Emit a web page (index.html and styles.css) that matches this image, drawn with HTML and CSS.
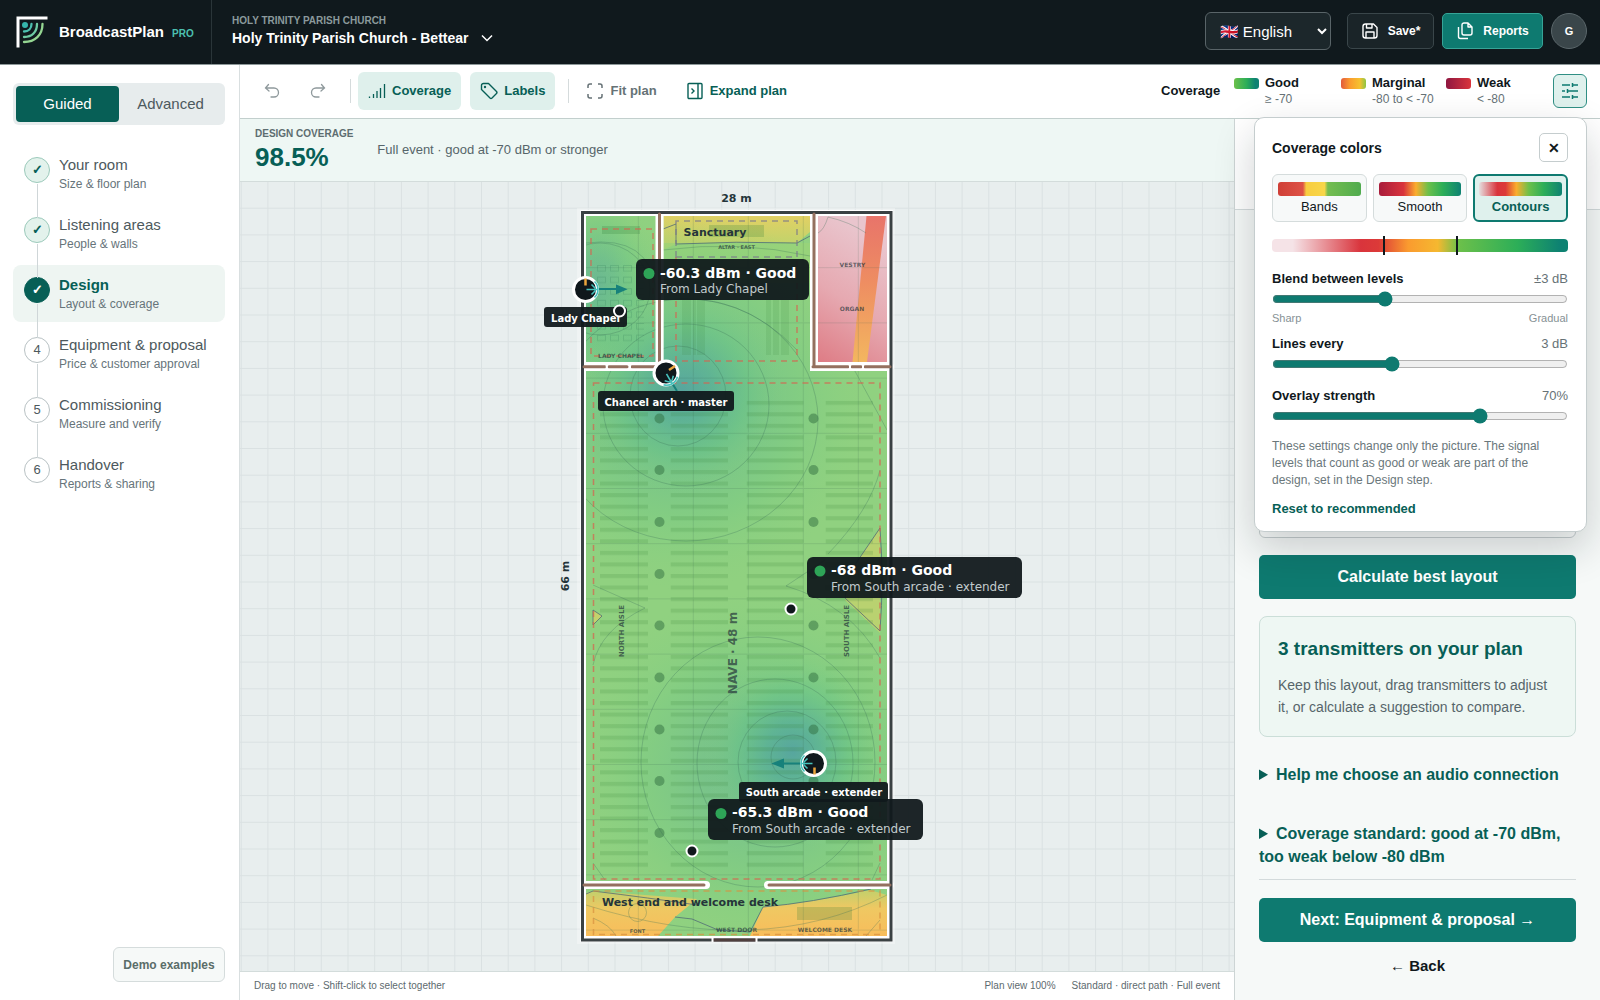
FILE: index.html
```html
<!DOCTYPE html>
<html lang="en">
<head>
<meta charset="utf-8">
<title>BroadcastPlan</title>
<link rel="stylesheet" href="styles.css">
</head>
<body>
<div class="app">
  <header class="topbar">
    <div class="brand">
      <svg class="brand-logo" viewBox="0 0 32 32" fill="none" stroke-linecap="round" aria-hidden="true">
        <path d="M2 30V2h28" stroke="#fff" stroke-width="3" stroke-linecap="square"/>
        <circle cx="9" cy="9" r="3" fill="#35b5ab"/>
        <path d="M15.500 8c0 4.500-3 7.500-7.500 7.500" stroke="#4cc0b0" stroke-width="2.300"/>
        <path d="M21 8c0 8-5 13-13 13" stroke="#6ecba4" stroke-width="2.300"/>
        <path d="M26.500 8c0 11-7.500 18-18.500 18" stroke="#95d692" stroke-width="2.300"/>
      </svg>
      <span class="brand-name">BroadcastPlan</span><span class="brand-tier">PRO</span>
    </div>
    <div class="project">
      <span class="project-site">HOLY TRINITY PARISH CHURCH</span>
      <button class="project-switch">Holy Trinity Parish Church - Bettear
        <svg width="12" height="8" viewBox="0 0 12 8" fill="none" stroke="currentColor" stroke-width="1.500"><path d="M1 1.500l5 5 5-5"/></svg>
      </button>
    </div>
    <div class="top-actions">
      <select class="lang" aria-label="Language"><option>🇬🇧 English</option></select>
      <button class="btn-save"><svg width="18" height="18" viewBox="0 0 18 18" fill="none" stroke="currentColor" stroke-width="1.400" stroke-linejoin="round"><path d="M2 4.500A2.500 2.500 0 0 1 4.500 2h8L16 5.500v8a2.500 2.500 0 0 1-2.500 2.500h-9A2.500 2.500 0 0 1 2 13.500zM5.500 2v4h5.500V2M5 16v-6h8v6"/></svg>Save*</button>
      <button class="btn-reports"><svg width="18" height="18" viewBox="0 0 18 18" fill="none" stroke="currentColor" stroke-width="1.400" stroke-linejoin="round"><path d="M6 3a2 2 0 0 1 2-2h4l4 4v6a2 2 0 0 1-2 2H8a2 2 0 0 1-2-2zM12 1v4h4M2.500 5v9.500A2 2 0 0 0 4.500 16.500H12"/></svg>Reports</button>
      <button class="avatar" aria-label="Account">G</button>
    </div>
  </header>

  <aside class="sidebar">
    <div class="mode"><button class="mode-on">Guided</button><button class="mode-off">Advanced</button></div>
    <ol class="steps">
      <li class="step done"><span class="dot">✓</span><div><b>Your room</b><small>Size &amp; floor plan</small></div></li>
      <li class="step done"><span class="dot">✓</span><div><b>Listening areas</b><small>People &amp; walls</small></div></li>
      <li class="step current"><span class="dot">✓</span><div><b>Design</b><small>Layout &amp; coverage</small></div></li>
      <li class="step"><span class="dot">4</span><div><b>Equipment &amp; proposal</b><small>Price &amp; customer approval</small></div></li>
      <li class="step"><span class="dot">5</span><div><b>Commissioning</b><small>Measure and verify</small></div></li>
      <li class="step"><span class="dot">6</span><div><b>Handover</b><small>Reports &amp; sharing</small></div></li>
    </ol>
    <button class="demo">Demo examples</button>
  </aside>

  <div class="toolbar">
    <button class="tool icon-only" aria-label="Undo"><svg width="16" height="16" viewBox="0 0 16 16" fill="none" stroke="currentColor" stroke-width="1.300" stroke-linecap="round"><path d="M4.500 1.500L1.500 5l3.500 3M1.500 5H10a4.500 4.500 0 0 1 0 9H7"/></svg></button>
    <button class="tool icon-only" aria-label="Redo"><svg width="16" height="16" viewBox="0 0 16 16" fill="none" stroke="currentColor" stroke-width="1.300" stroke-linecap="round"><path d="M11.500 1.500l3 3.500-3.500 3M14.500 5H6a4.500 4.500 0 0 0 0 9h3"/></svg></button>
    <i class="divider"></i>
    <button class="tool on"><svg width="18" height="18" viewBox="0 0 18 18" fill="none" stroke="currentColor" stroke-width="1.300"><path d="M1.500 14.500V16M5.500 12v4M9 9v7M12.500 6v10M16.500 2v14"/></svg>Coverage</button>
    <button class="tool on labels"><svg width="18" height="18" viewBox="0 0 18 18" fill="none" stroke="currentColor" stroke-width="1.400" stroke-linejoin="round"><path d="M1.500 3.500a2 2 0 0 1 2-2h5l8 8a1.500 1.500 0 0 1 0 2l-4.500 4.500a1.500 1.500 0 0 1-2 0l-8.500-8.500z"/><circle cx="5" cy="5" r=".5"/></svg>Labels</button>
    <i class="divider"></i>
    <button class="tool"><svg width="18" height="18" viewBox="0 0 18 18" fill="none" stroke="currentColor" stroke-width="1.500"><path d="M2 6V4a2 2 0 0 1 2-2h2M12 2h2a2 2 0 0 1 2 2v2M16 12v2a2 2 0 0 1-2 2h-2M6 16H4a2 2 0 0 1-2-2v-2"/></svg>Fit plan</button>
    <button class="tool strong"><svg width="18" height="18" viewBox="0 0 18 18" fill="none" stroke="currentColor" stroke-width="1.400"><rect x="2" y="1.500" width="14" height="15" rx="1"/><path d="M12 1.500v15M5.500 6.500L8 9l-2.500 2.500"/></svg>Expand plan</button>
    <div class="legend">
      <strong>Coverage</strong>
      <div class="key"><i class="swatch good"></i><div><b>Good</b><small>≥ -70</small></div></div>
      <div class="key"><i class="swatch marginal"></i><div><b>Marginal</b><small>-80 to &lt; -70</small></div></div>
      <div class="key"><i class="swatch weak"></i><div><b>Weak</b><small>&lt; -80</small></div></div>
    </div>
    <button class="settings" aria-label="Coverage colors"><svg width="18" height="18" viewBox="0 0 18 18" fill="none" stroke="currentColor" stroke-width="1.500"><path d="M1 3h8M12 3h5M11.500 1v4M1 9h3M7 9h10M6.500 7v4M1 15h8M12 15h5M11.500 13v4"/></svg></button>
  </div>

  <main class="stage">
    <section class="summary">
      <div><h2>DESIGN COVERAGE</h2><p class="score">98.5%</p></div>
      <p class="basis">Full event · good at -70 dBm or stronger</p>
    </section>
    <div class="canvas">
      <svg class="plan" viewBox="240 182 994 789">
        <defs>
          <pattern id="grid" x="240.700" y="181" width="26.700" height="26.700" patternUnits="userSpaceOnUse"><path d="M0 .5H26.700M.5 0V26.700" stroke="#dae1e2" fill="none"/></pattern>
          <pattern id="meters" x="637.800" y="212" width="55" height="55.200" patternUnits="userSpaceOnUse"><path d="M0 .5H55M.5 0V55" stroke="#2f5f4a" stroke-opacity=".16" fill="none"/></pattern>
          <pattern id="pews" x="600" y="400.700" width="300" height="11.550" patternUnits="userSpaceOnUse"><path d="M0 2H48M70.700 2H128M146.700 2H203.500M225.700 2H273" stroke="#2f7a35" stroke-opacity=".16" stroke-width="4"/></pattern>
          <pattern id="chairs" x="597" y="265" width="13" height="11.600" patternUnits="userSpaceOnUse"><rect x=".5" y=".5" width="8" height="5.500" fill="none" stroke="#2f7a55" stroke-opacity=".22"/></pattern>
          <radialGradient id="hot"><stop offset="0" stop-color="#4f9fa3"/><stop offset=".3" stop-color="#54ae98" stop-opacity=".85"/><stop offset=".62" stop-color="#67c487" stop-opacity=".65"/><stop offset="1" stop-color="#84cf80" stop-opacity="0"/></radialGradient>
          <linearGradient id="vestry" x1=".3" y1="0" x2="0" y2="1"><stop offset="0" stop-color="#e9c5cd"/><stop offset=".5" stop-color="#e6a9b1"/><stop offset="1" stop-color="#de7c85"/></linearGradient>
          <linearGradient id="strip" x2="0" y2="1"><stop offset="0" stop-color="#e8746a"/><stop offset=".45" stop-color="#ee8d62"/><stop offset="1" stop-color="#f3b65f"/></linearGradient>
          <linearGradient id="sun" x2="0" y2="1"><stop offset="0" stop-color="#e2d064"/><stop offset="1" stop-color="#b9d46d"/></linearGradient>
          <linearGradient id="amber" x2="0" y2="1"><stop offset="0" stop-color="#c2d06c"/><stop offset=".4" stop-color="#efc862"/><stop offset="1" stop-color="#f8bd5b"/></linearGradient>
          <clipPath id="rooms"><path d="M586 216H656V362H586zM663.500 216H810V371H663.500zM818 216H887V362H818zM586 371H887V881H586zM706 880H767V890H706zM586 889H887V936H586z"/></clipPath>
        </defs>
        <rect x="-400" y="-200" width="2400" height="1500" fill="url(#grid)"/>
        <rect x="577" y="208" width="318" height="736" fill="#fff" opacity=".3"/>
        <rect x="580.500" y="210" width="312.500" height="732" fill="#fff"/>
        <g clip-path="url(#rooms)">
          <rect x="580" y="210" width="313" height="732" fill="#90d180"/>
          <path d="M663 216H810V232L797 243Q735 241 676 244L663 250z" fill="url(#sun)"/>
          <rect x="663" y="243" width="147" height="40" fill="#9dd376" opacity=".6"/>
          <ellipse cx="598" cy="285" rx="60" ry="95" fill="url(#hot)" opacity=".6"/>
          <ellipse cx="682" cy="400" rx="190" ry="190" fill="url(#hot)" opacity=".5"/>
          <ellipse cx="682" cy="390" rx="105" ry="105" fill="url(#hot)" opacity=".75"/>
          <ellipse cx="760" cy="770" rx="190" ry="180" fill="url(#hot)" opacity=".45"/>
          <ellipse cx="793" cy="752" rx="90" ry="100" fill="url(#hot)" opacity=".8"/>
          <path d="M880 528L850 572 845 600 880 633z" fill="#c3d26c" opacity=".8"/>
          <path d="M593 610l9 6-9 9z" fill="#c3d26c"/>
          <rect x="818" y="216" width="69" height="146" fill="url(#vestry)"/>
          <path d="M866.500 216H886L867 362H852.500z" fill="url(#strip)"/>
          <path d="M586 893L593 891 697 899 675 917 658 936H586z" fill="url(#amber)"/>
          <path d="M763 907Q810 903 870 890L887 895V936H750z" fill="url(#amber)"/>
          <rect x="586" y="216" width="301" height="720" fill="url(#meters)"/>
          <rect x="600" y="400.700" width="273" height="467" fill="url(#pews)"/>
          <rect x="597" y="265" width="47" height="78" fill="url(#chairs)"/>
          <path fill="#2f7a35" fill-opacity=".22" d="M602 226H640V234H602zM709 225H764V237H709zM797 907H852V920H797z"/>
          <path fill="#2f7a35" fill-opacity=".12" d="M682 300H691V355H682zM693 300H696V355H693zM697 300H705V355H697zM766 300H771V355H766zM773 300H779V355H773zM781 300H789V355H781z"/>
          <g fill="#2f6b3c" fill-opacity=".48">
            <circle cx="659.500" cy="418.500" r="5"/><circle cx="659.500" cy="470" r="5"/><circle cx="659.500" cy="522" r="5"/><circle cx="659.500" cy="574" r="5"/><circle cx="659.500" cy="625.500" r="5"/><circle cx="659.500" cy="677.500" r="5"/><circle cx="659.500" cy="729.500" r="5"/><circle cx="659.500" cy="781" r="5"/><circle cx="659.500" cy="833" r="5"/>
            <circle cx="813.500" cy="418.500" r="5"/><circle cx="813.500" cy="470" r="5"/><circle cx="813.500" cy="522" r="5"/><circle cx="813.500" cy="574" r="5"/><circle cx="813.500" cy="625.500" r="5"/><circle cx="813.500" cy="677.500" r="5"/><circle cx="813.500" cy="729.500" r="5"/><circle cx="813.500" cy="781" r="5"/>
          </g>
          <g fill="none" stroke="#3c7058" stroke-opacity=".3">
            <ellipse cx="678" cy="396" rx="48" ry="50"/><ellipse cx="686" cy="405" rx="83" ry="81"/><ellipse cx="686" cy="420" rx="132" ry="121"/>
            <ellipse cx="793" cy="757" rx="22" ry="22"/><ellipse cx="787" cy="762" rx="49" ry="51"/><ellipse cx="775" cy="763" rx="78" ry="84"/><ellipse cx="758" cy="762" rx="117" ry="125"/>
            <ellipse cx="600" cy="289" rx="50" ry="46"/><path d="M586 243Q650 235 656 290M880 470Q870 510 828 554M786 586L825 560M786 586Q850 605 880 658M593 585L645 608Q600 630 593 665M663 250Q740 240 810 256M586 905Q760 960 887 895M593 918Q610 925 616 936M880 920L866 936M593 863L605 880M880 863L872 880M663 300Q740 290 797 350M850 362L887 430M818 233Q824 230 828 217Q850 222 866 233"/>
            <circle cx="637.500" cy="912.500" r="9"/>
          </g>
          <path d="M663 229L676 224V244Q736 241 797 243L810 236M880 528L850 572 845 598 880 631Q884 580 880 528M593 610l9 6-9 9zM586 894L593 891Q650 898 697 905M763 907Q810 903 871 889M675 917L692 919 718 930 750 932 763 907" fill="none" stroke="#4d6675" stroke-opacity=".75"/>
        </g>
        <g fill="none" stroke="#d9604f" stroke-opacity=".7" stroke-width="1.500" stroke-dasharray="6 5">
          <rect x="591" y="229" width="62" height="127"/><path d="M676 257V361H797V257"/><rect x="593.500" y="383" width="286.500" height="496"/><rect x="593.500" y="891" width="286.500" height="43.500" stroke="#d9903f"/>
          <path d="M676 257V221H797V257z" stroke="#77738c"/>
        </g>
        <g fill="none" stroke-linecap="round">
          <path d="M659.500 214V364M814 214V366M584 366.700H660M814 366.700H890M584 885H706M768 885H890" stroke="#fff" stroke-width="8"/>
          <rect x="582.500" y="212.500" width="308.500" height="727.500" stroke="#3a4143" stroke-width="3" stroke-linecap="butt"/>
          <path d="M659.500 214V364M814 214V366M584 366.700H605M609 366.700H627M632 366.700H656M813 366.700H848M852 366.700H861M865 366.700H890M584 885H704M769 885H890" stroke="#94705f" stroke-width="3"/>
          <path d="M714 940H755" stroke="#4f3f3e" stroke-width="3"/><path d="M712.500 938V942M756.500 938V942M606.700 364V369M630 364V369M850 364V369M863 364V369" stroke="#fff" stroke-width="2" stroke-linecap="butt"/>
        </g>
        <g class="plan-text">
          <text x="736.500" y="202" class="t11">28 m</text>
          <text transform="translate(569 576) rotate(-90)" class="t11">66 m</text>
          <text x="715" y="236" class="t11">Sanctuary</text>
          <text x="690" y="906" class="t11">West end and welcome desk</text>
          <g class="faint">
            <text transform="translate(737 653) rotate(-90)" class="t12">NAVE · 48 m</text>
            <text transform="translate(624 631) rotate(-90)" class="t7">NORTH AISLE</text>
            <text transform="translate(849 631) rotate(-90)" class="t7">SOUTH AISLE</text>
            <text x="852.500" y="267" class="t6">VESTRY</text><text x="852" y="311" class="t6">ORGAN</text>
            <text x="736.500" y="249" class="t5">ALTAR · EAST</text><text x="621" y="358" class="t6">LADY CHAPEL</text>
            <text x="637.500" y="933" class="t5">FONT</text><text x="736.500" y="932" class="t6">WEST DOOR</text><text x="825" y="932" class="t6">WELCOME DESK</text>
          </g>
        </g>
        <g fill="#17817b" stroke="#17817b" stroke-width="2">
          <path d="M597 289H618M617 286l8 3.300-8 3.400zM672 383l5 8M800 763.500H782M783 760l-9 3.500 9 3.500z"/>
        </g>
        <g class="nodes">
          <g transform="translate(585.500 289.500)"><circle r="12" fill="#10181c" stroke="#fff" stroke-width="3"/><path d="M0-11V-4" stroke="#eba53c" stroke-width="2.500"/><g class="fan"><path d="M1 0H13M6-5L10-1M6 5L10 1M9-8A11 11 0 0 1 9 8"/></g></g>
          <g transform="translate(666 373)"><circle r="12" fill="#10181c" stroke="#fff" stroke-width="3"/><path d="M3-3L9-7" stroke="#eba53c" stroke-width="2.500"/><g class="fan" transform="rotate(60)"><path d="M1 0H13M6-5L10-1M6 5L10 1M9-8A11 11 0 0 1 9 8"/></g></g>
          <g transform="translate(813.500 763.500)"><circle r="12" fill="#10181c" stroke="#fff" stroke-width="3"/><path d="M1 4V11" stroke="#eba53c" stroke-width="2.500"/><g class="fan" transform="rotate(180)"><path d="M1 0H13M6-5L10-1M6 5L10 1M9-8A11 11 0 0 1 9 8"/></g></g>
        </g>
        <g class="tag"><rect x="544" y="307" width="83" height="20" rx="3"/><text x="585.500" y="321.500">Lady Chapel</text>
          <rect x="598" y="391" width="136" height="20" rx="3"/><text x="666" y="405.500">Chancel arch · master</text>
          <rect x="739" y="782" width="149" height="20" rx="3"/><text x="814" y="795.500">South arcade · extender</text></g>
        <g fill="#10181c" stroke="#fff" stroke-width="2"><circle cx="619.500" cy="311" r="5.500"/><circle cx="791" cy="609" r="5.500"/><circle cx="692" cy="851" r="5.500"/></g>
        <g class="tip" transform="translate(636 259)"><rect width="173" height="41" rx="6"/><circle cx="13" cy="14.500" r="5.500"/><text x="24" y="18.500" class="tip-main">-60.3 dBm · Good</text><text x="24" y="34" class="tip-sub">From Lady Chapel</text></g>
        <g class="tip" transform="translate(807 557)"><rect width="215" height="41" rx="6"/><circle cx="13" cy="14" r="5.500"/><text x="24" y="18" class="tip-main">-68 dBm · Good</text><text x="24" y="34" class="tip-sub">From South arcade · extender</text></g>
        <g class="tip" transform="translate(708 799)"><rect width="215" height="41" rx="6"/><circle cx="13" cy="14.500" r="5.500"/><text x="24" y="18" class="tip-main">-65.3 dBm · Good</text><text x="24" y="34" class="tip-sub">From South arcade · extender</text></g>
      </svg>
    </div>
    <footer class="status"><span>Drag to move · Shift-click to select together</span><span class="push">Plan view 100%</span><span>Standard · direct path · Full event</span></footer>
  </main>

  <aside class="panel">
    <div class="panel-head"></div>
    <div class="panel-body">
      <div class="options"></div>
      <button class="primary">Calculate best layout</button>
      <section class="note"><h3>3 transmitters on your plan</h3><p>Keep this layout, drag transmitters to adjust it, or calculate a suggestion to compare.</p></section>
      <details class="help"><summary>Help me choose an audio connection</summary></details>
      <details class="standard"><summary>Coverage standard: good at -70 dBm, too weak below -80 dBm</summary></details>
      <div class="nav"><button class="primary">Next: Equipment &amp; proposal →</button><button class="back">← Back</button></div>
    </div>
  </aside>

  <section class="popover">
    <div class="pop-head"><h2>Coverage colors</h2><button class="close" aria-label="Close">✕</button></div>
    <div class="styles">
      <button class="style"><i class="ramp bands"></i>Bands</button>
      <button class="style"><i class="ramp smooth"></i>Smooth</button>
      <button class="style chosen"><i class="ramp contours"></i>Contours</button>
    </div>
    <div class="scale"><i class="mark low"></i><i class="mark high"></i></div>
    <div class="field blend"><label for="blend">Blend between levels</label><output>±3 dB</output><input id="blend" type="range" min="0" max="8" value="3"><small>Sharp</small><small>Gradual</small></div>
    <div class="field lines"><label for="lines">Lines every</label><output>3 dB</output><input id="lines" type="range" min="1" max="6" value="3"></div>
    <div class="field"><label for="overlay">Overlay strength</label><output>70%</output><input id="overlay" type="range" min="20" max="90" value="70"></div>
    <p>These settings change only the picture. The signal levels that count as good or weak are part of the design, set in the Design step.</p>
    <button class="reset">Reset to recommended</button>
  </section>
</div>
</body>
</html>
```
FILE: styles.css
```css
* { box-sizing: border-box; }
body { margin: 0; font: 13px/16px "Liberation Sans", Arial, sans-serif; color: #10181c; background: #fff; }
h2, h3, p, ol { margin: 0; padding: 0; }
button { font: inherit; color: inherit; padding: 0; border: 0; background: none; cursor: pointer; }
svg { flex: none; }
b, small { display: block; }

.app { position: relative; display: grid; grid-template: 65px 54px minmax(0, 1fr) / 240px minmax(0, 1fr) 366px; min-height: 100vh; }

.topbar { grid-column: 1 / -1; display: flex; background: #10191d; color: #fff; border-bottom: 1px solid #8d9899; }
.brand { width: 212px; display: flex; align-items: center; padding-left: 16px; border-right: 1px solid #2a3539; }
.brand-logo { width: 32px; height: 32px; }
.brand-name { margin-left: 11px; font-size: 15px; font-weight: 700; }
.brand-tier { margin: 3px 0 0 8px; font-size: 10px; font-weight: 700; color: #4cc0b0; }
.project { display: flex; flex-direction: column; justify-content: center; align-items: flex-start; padding: 0 0 2px 20px; }
.project-site { font-size: 10px; font-weight: 700; line-height: 14px; color: #8b999c; }
.project-switch { display: flex; align-items: center; gap: 12px; font-size: 14px; font-weight: 700; line-height: 20px; }
.top-actions { margin-left: auto; display: flex; align-items: center; gap: 8px; padding: 0 13px 2px 0; }
.lang { width: 126px; height: 38px; margin-right: 8px; padding: 0 0 0 10px; font: 15px "Liberation Sans", "Noto Color Emoji", sans-serif; color: #fff; background: #1c272b; border: 1px solid #596468; border-radius: 6px; }
.btn-save, .btn-reports { display: flex; align-items: center; justify-content: center; gap: 9px; height: 36px; font-size: 12px; font-weight: 700; border: 1px solid #3a464a; border-radius: 5px; background: #1a2428; }
.btn-save { width: 87px; }
.btn-reports { width: 101px; background: #0e7a70; border-color: #36a497; }
.avatar { width: 36px; height: 36px; font-size: 11px; font-weight: 700; border: 1px solid #5b676b; border-radius: 50%; background: #3a464a; }

.sidebar { grid-row: 2 / 4; display: flex; flex-direction: column; padding: 18px 14px 18px 13px; border-right: 1px solid #d9dfe0; background: #fff; }
.mode { display: grid; grid-template-columns: 1fr 1fr; padding: 3px; border-radius: 6px; background: #e7eced; font-size: 15px; }
.mode button { height: 36px; border-radius: 4px; color: #4d595d; }
.mode .mode-on { background: #075f56; color: #fff; }
.steps { list-style: none; margin-top: 20px; display: grid; gap: 3px; }
.step { position: relative; display: flex; gap: 9px; height: 57px; padding: 9px 0 0 11px; border-radius: 8px; color: #4d595d; }
.step b { font-size: 15px; font-weight: 400; line-height: 22px; }
.step small { font-size: 12px; line-height: 16px; color: #66747a; }
.step:not(:last-child)::after { content: ""; position: absolute; left: 24px; top: 39px; width: 1px; height: 34px; background: #cfd6d8; z-index: 1; }
.dot { width: 26px; height: 26px; margin-top: 3px; border: 1px solid #b9c2c4; border-radius: 50%; background: #fff; text-align: center; line-height: 24px; }
.done .dot { border-color: #9ccabb; background: #e3f2ec; color: #075f56; font-weight: 700; }
.current { background: #eef5f2; }
.current .dot { background: #075f56; border-color: #075f56; color: #fff; font-weight: 700; }
.current b { font-weight: 700; color: #075f56; }
.demo { margin-top: auto; align-self: flex-end; width: 112px; height: 35px; border: 1px solid #d5dcdc; border-radius: 6px; background: #f6f9f8; color: #5a6d69; font-size: 12px; font-weight: 700; }

.toolbar { grid-column: 2 / 4; display: flex; align-items: center; padding: 0 13px 2px 9px; border-bottom: 1px solid #c2cfcd; }
.tool { display: flex; align-items: center; gap: 6px; height: 38px; padding: 0 10px; border-radius: 6px; font-weight: 700; color: #667276; }
.icon-only { width: 46px; padding: 0 15px; color: #8f999c; }
.tool.on, .tool.strong { color: #075f56; }
.tool.on { background: #dff0ec; }
.labels { margin-left: 9px; }
.divider { width: 1px; height: 24px; margin: 0 7px 0 9px; background: #d5dbdc; }
.labels + .divider { margin: 0 7px 0 13px; }
.strong { margin-left: 9px; }
.legend { margin-left: auto; display: grid; grid-template-columns: 73px 107px 105px 107px; align-items: center; }
.key { display: flex; gap: 6px; }
.key small { font-size: 12px; color: #667276; }
.swatch { width: 25px; height: 11px; margin-top: 3px; border-radius: 3px; }
.good { background: linear-gradient(90deg, #6cc04a, #2cae58 50%, #0e8272 85%); }
.marginal { background: linear-gradient(90deg, #e25a3c, #fa9b2f 35%, #f5c130 75%, #8cc544); }
.weak { background: linear-gradient(90deg, #8f1640, #d9343c); }
.settings { width: 34px; height: 34px; display: grid; place-items: center; border: 1px solid #2f8f84; border-radius: 6px; background: #dff1ed; color: #0e7a70; }

.stage { display: flex; flex-direction: column; min-width: 0; }
.summary { display: flex; align-items: center; gap: 24px; height: 63px; padding: 0 15px; background: #eef7f4; border-bottom: 1px solid #d3dcdb; }
.summary h2 { font-size: 10px; line-height: 14px; color: #5d6d70; }
.score { font-size: 26px; font-weight: 700; line-height: 32px; color: #075f56; }
.basis { color: #56656a; }
.canvas { flex: 1; min-height: 0; background: #e8eeee; overflow: hidden; }
.plan { display: block; width: 100%; height: 100%; overflow: visible; }
.plan-text { font-family: "DejaVu Sans", sans-serif; font-weight: 700; fill: #25353a; text-anchor: middle; }
.faint { fill-opacity: .7; }
.t12 { font-size: 12px; }
.t11 { font-size: 11px; }
.t7 { font-size: 7px; }
.t6 { font-size: 6px; }
.t5 { font-size: 5px; }
.fan { fill: none; stroke: #47c2bd; stroke-width: 1.6; }
.tag { font: 700 10px "DejaVu Sans", sans-serif; text-anchor: middle; }
.tag rect, .tip rect { fill: #10181c; fill-opacity: .94; }
.tag text { fill: #fff; }
.tip { font-family: "DejaVu Sans", sans-serif; }
.tip circle { fill: #2ea457; }
.tip-main { font-size: 14px; font-weight: 700; fill: #fff; }
.tip-sub { font-size: 12px; fill: #c2cbcd; }
.status { display: flex; align-items: center; gap: 16px; height: 29px; padding: 0 14px; border-top: 1px solid #d3dcdb; font-size: 10px; color: #5d6a6e; }
.push { margin-left: auto; }

.panel { display: flex; flex-direction: column; border-left: 1px solid #cdd5d5; background: #f6f9f8; }
.panel-head { height: 91px; border-bottom: 1px solid #d3dadb; background: #fff; }
.panel-body { flex: 1; display: flex; flex-direction: column; padding: 24px 24px 15px; }
.options { flex: 1; border: 1px solid #c5cdce; border-radius: 6px; background: #fafcfb; }
.primary { width: 100%; height: 44px; border-radius: 5px; background: #0e7a70; color: #fff; font-size: 16px; font-weight: 700; }
.options + .primary { margin-top: 17px; }
.note { margin-top: 17px; padding: 20px 18px; height: 121px; border: 1px solid #cbded8; border-radius: 8px; background: #eef7f3; }
.note h3 { font-size: 19px; line-height: 24px; color: #075f56; }
.note p { margin-top: 13px; font-size: 14px; line-height: 22px; color: #56656a; }
details { font-size: 16px; font-weight: 700; line-height: 23px; color: #075f56; }
.help { margin-top: 26px; }
.standard { margin-top: 36px; }
.nav { margin-top: 11px; padding-top: 18px; border-top: 1px solid #d3dadb; }
.back { display: block; width: 100%; height: 38px; margin-top: 5px; font-size: 15px; font-weight: 700; }

.popover { position: absolute; top: 117px; right: 13px; width: 333px; height: 415px; padding: 15px 18px 15px 17px; border: 1px solid #c5cdce; border-radius: 10px; background: #fff; box-shadow: 0 16px 40px rgba(16, 24, 28, .2); }
.pop-head { display: flex; align-items: center; justify-content: space-between; }
.pop-head h2 { font-size: 14px; }
.close { width: 29px; height: 29px; border: 1px solid #c5cdce; border-radius: 5px; font-size: 14px; font-weight: 700; }
.styles { display: grid; grid-template-columns: repeat(3, 1fr); gap: 6px; margin-top: 12px; }
.style { display: flex; flex-direction: column; gap: 3px; height: 48px; padding: 7px 5px 0; border: 1px solid #d5dcdc; border-radius: 6px; background: #f7f9f9; text-align: center; align-items: center; }
.ramp { width: 100%; height: 14px; border-radius: 3px; flex: none; }
.bands { background: linear-gradient(90deg, #cf3f37, #de5246 30%, #f8cd40 34%, #f8d649 56%, #74bd50 60%, #50ab4e); }
.smooth { background: linear-gradient(90deg, #a81c3b, #d9343c 30%, #fbad2e 45%, #6cc04a 60%, #2cae58 78%, #0e8272); }
.contours { background: linear-gradient(90deg, #e5dfe0, #d9343c 22%, #dc3a38 32%, #fbad2e 45%, #6cc04a 60%, #2cae58 78%, #0e8272); }
.chosen { padding: 6px 4px 0; border: 2px solid #0e7a70; background: #dff1ed; font-weight: 700; color: #075f56; }
.scale { position: relative; height: 13px; margin-top: 17px; border-radius: 4px; background: linear-gradient(90deg, #f5e3e7 7%, #d9343c 30%, #dc3a38 36%, #fa9b2f 46%, #f5b830 56%, #6cc04a 63%, #2cae58 83%, #0e8272 97%); }
.mark { position: absolute; top: -3px; width: 2px; height: 19px; background: #10181c; }
.low { left: 37.4%; }
.high { left: 62%; }
.field { display: grid; grid-template-columns: 1fr auto; row-gap: 2px; margin-top: 13px; }
.blend { margin-top: 19px; }
.lines { margin: 11px 0 14px; }
.field label { font-weight: 700; }
.field output { justify-self: end; color: #667276; }
.field input { grid-column: 1 / -1; width: auto; height: 16px; margin: 2px 0; accent-color: #0e7a70; }
.field small { font-size: 11px; line-height: 14px; color: #869195; }
.popover p { margin-top: 12px; font-size: 12px; line-height: 17px; color: #6a777b; }
.reset { margin-top: 12px; font-weight: 700; color: #075f56; }
```
